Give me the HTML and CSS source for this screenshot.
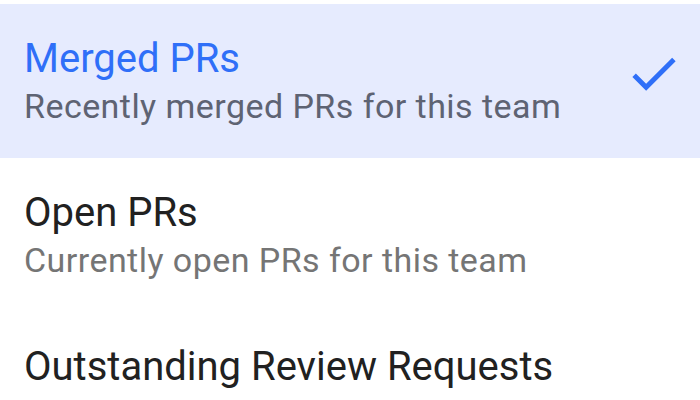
FILE: index.html
```html
<!DOCTYPE html>
<html lang="en">
<head>
  <meta charset="UTF-8">
  <title>PR Lists</title>
  <link rel="stylesheet" href="styles.css">
</head>
<body>

  <ul class="menu">
    <li class="item selected">
      <div class="itemText">
        <div class="itemTitle">Merged PRs</div>
        <div class="itemSub">Recently merged PRs for this team</div>
      </div>
      <svg class="check" viewBox="0 0 24 24"><path d="M9 16.17L4.83 12l-1.42 1.41L9 19 21 7l-1.41-1.41z"/></svg>
    </li>
    <li class="item">
      <div class="itemText">
        <div class="itemTitle">Open PRs</div>
        <div class="itemSub">Currently open PRs for this team</div>
      </div>
    </li>
    <li class="item">
      <div class="itemText">
        <div class="itemTitle">Outstanding Review Requests</div>
      </div>
    </li>
  </ul>

</body>
</html>
```

FILE: styles.css
```css
* { box-sizing: border-box; }
body {
  margin: 0;
  padding: 0;
  font-family: Roboto, 'Noto Sans', sans-serif;
  background: #fff;
  color: #212121;
  overflow: hidden;
}
.menu {
  list-style: none;
  margin: 0;
  padding: 4px 0 0;
}
.item {
  display: flex;
  align-items: flex-start;
  padding: 32px 17px 27px 24px;
}
.item.selected {
  background: #e6ebfe;
}
.itemText {
  flex: 1;
}
.itemTitle {
  font-size: 40px;
  line-height: 46px;
  color: #212121;
}
.itemSub {
  font-size: 34px;
  line-height: 49px;
  letter-spacing: 0.45px;
  color: #757575;
}
.selected .itemTitle {
  color: #2f6ff8;
}
.selected .itemSub {
  color: #5e6373;
}
.check {
  width: 59px;
  height: 59px;
  margin-top: 8px;
  fill: #2f6ff8;
}
```
